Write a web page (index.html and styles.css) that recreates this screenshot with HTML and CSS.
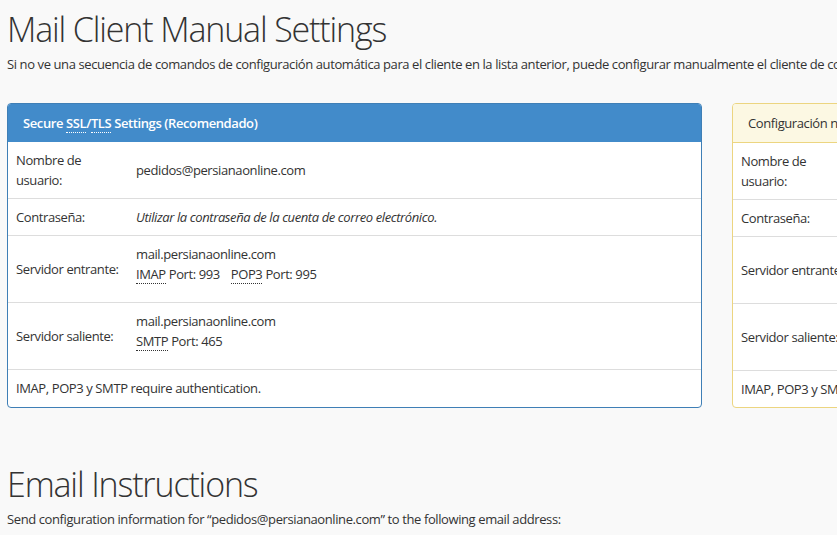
FILE: index.html
```html
<!DOCTYPE html>
<html>
<head>
  <meta charset="UTF-8">
  <title>Mail Client Manual Settings</title>
  <link rel="stylesheet" href="styles.css">
</head>
<body>
  <h1>Mail Client Manual Settings</h1>
  <p class="lead-text">Si no ve una secuencia de comandos de configuración automática para el cliente en la lista anterior, puede configurar manualmente el cliente de correo con los siguientes ajustes:</p>

  <div class="panels">
    <div class="panel panel-primary">
      <div class="panel-heading">Secure <abbr title="Secure Sockets Layer">SSL</abbr>/<abbr title="Transport Layer Security">TLS</abbr> Settings (Recomendado)</div>
      <table class="settings">
        <tr class="row-user">
          <td class="label">Nombre de usuario:</td>
          <td>pedidos@persianaonline.com</td>
        </tr>
        <tr>
          <td class="label">Contraseña:</td>
          <td><em>Utilizar la contraseña de la cuenta de correo electrónico.</em></td>
        </tr>
        <tr class="row-server">
          <td class="label">Servidor entrante:</td>
          <td>
            <div>mail.persianaonline.com</div>
            <div><abbr>IMAP</abbr> Port: 993 <span class="port-gap"></span><abbr>POP3</abbr> Port: 995</div>
          </td>
        </tr>
        <tr class="row-server">
          <td class="label">Servidor saliente:</td>
          <td>
            <div>mail.persianaonline.com</div>
            <div><abbr>SMTP</abbr> Port: 465</div>
          </td>
        </tr>
        <tr>
          <td colspan="2">IMAP, POP3 y SMTP require authentication.</td>
        </tr>
      </table>
    </div>

    <div class="panel panel-warning">
      <div class="panel-heading">Configuración no SSL (No recomendado)</div>
      <table class="settings">
        <tr class="row-user">
          <td class="label">Nombre de usuario:</td>
          <td>pedidos@persianaonline.com</td>
        </tr>
        <tr>
          <td class="label">Contraseña:</td>
          <td><em>Utilizar la contraseña de la cuenta de correo electrónico.</em></td>
        </tr>
        <tr class="row-server">
          <td class="label">Servidor entrante:</td>
          <td>
            <div>mail.persianaonline.com</div>
            <div><abbr>IMAP</abbr> Port: 143 <span class="port-gap"></span><abbr>POP3</abbr> Port: 110</div>
          </td>
        </tr>
        <tr class="row-server">
          <td class="label">Servidor saliente:</td>
          <td>
            <div>mail.persianaonline.com</div>
            <div><abbr>SMTP</abbr> Port: 587</div>
          </td>
        </tr>
        <tr>
          <td colspan="2">IMAP, POP3 y SMTP require authentication.</td>
        </tr>
      </table>
    </div>
  </div>

  <h1 class="section-title">Email Instructions</h1>
  <p class="lead-text">Send configuration information for “pedidos@persianaonline.com” to the following email address:</p>
</body>
</html>
```

FILE: styles.css
```css
html {
  overflow: hidden;
}
body {
  font-family: 'Open Sans', 'Liberation Sans', sans-serif;
  font-size: 13px;
  letter-spacing: -0.4px;
  line-height: 20px;
  color: #333;
  background: #f9f9f9;
  margin: 0;
  padding: 0 7px;
  width: 1600px;
}
h1 {
  font-size: 34px;
  font-weight: 300;
  letter-spacing: -1.15px;
  line-height: 40px;
  margin: 9px 0 5px;
  color: #333;
}
.lead-text {
  margin: 0 0 29px;
  white-space: nowrap;
}
.panels {
  display: flex;
  gap: 30px;
}
.panel {
  width: 695px;
  box-sizing: border-box;
  border: 1px solid #3f7fb6;
  border-radius: 4px;
  background: #fff;
  overflow: hidden;
}
.panel-heading {
  padding: 10px 15px;
  font-weight: 600;
  line-height: 18px;
}
.panel-primary .panel-heading {
  background: #428bca;
  color: #fff;
}
.panel-warning {
  border-color: #ecd580;
}
.panel-warning .panel-heading {
  background: #fcf8e3;
  color: #333;
  font-weight: 400;
  border-bottom: 1px solid #ecd580;
}
.settings {
  width: 100%;
  border-collapse: collapse;
}
.settings td {
  padding: 8px;
  border-top: 1px solid #ddd;
  vertical-align: middle;
}
.settings tr:first-child td {
  border-top: 0;
}
.settings .label {
  width: 104px;
}
.row-server td {
  padding-top: 8px;
  padding-bottom: 18px;
}
.row-server td.label {
  padding-top: 13px;
  padding-bottom: 13px;
}
abbr {
  text-decoration: none;
  border-bottom: 1px dotted #333;
  cursor: help;
}
.panel-primary .panel-heading abbr {
  border-bottom-color: #fff;
}
.port-gap {
  display: inline-block;
  width: 8px;
}
.section-title {
  margin-top: 56px;
}
```
